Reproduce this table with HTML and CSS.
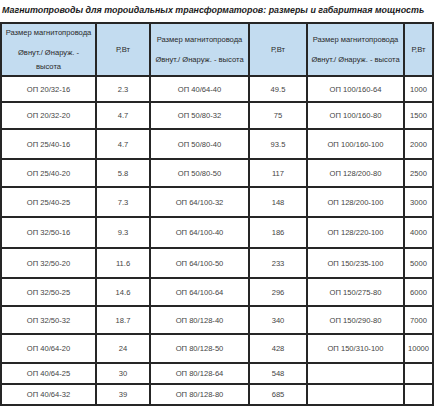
FILE: index.html
```html
<!DOCTYPE html>
<html lang="ru">
<head>
  <meta charset="UTF-8" />
  <title>Магнитопроводы</title>
  <link rel="stylesheet" href="styles.css">
</head>
<body>

  <h1 class="title">Магнитопроводы для тороидальных трансформаторов: размеры и габаритная мощность</h1>

  <div class="sizes">
    <div class="cell head"><p>Размер магнитопровода</p><p class="short">Øвнут./ Øнаруж. - высота</p></div>
    <div class="cell head">Р,Вт</div>
    <div class="cell head"><p>Размер магнитопровода</p><p>Øвнут./ Øнаруж. - высота</p></div>
    <div class="cell head">Р,Вт</div>
    <div class="cell head"><p>Размер магнитопровода</p><p>Øвнут./ Øнаруж. - высота</p></div>
    <div class="cell head">Р,Вт</div>

    <div class="cell">ОП 20/32-16</div><div class="cell">2.3</div><div class="cell">ОП 40/64-40</div><div class="cell">49.5</div><div class="cell">ОП 100/160-64</div><div class="cell">1000</div>
    <div class="cell">ОП 20/32-20</div><div class="cell">4.7</div><div class="cell">ОП 50/80-32</div><div class="cell">75</div><div class="cell">ОП 100/160-80</div><div class="cell">1500</div>
    <div class="cell">ОП 25/40-16</div><div class="cell">4.7</div><div class="cell">ОП 50/80-40</div><div class="cell">93.5</div><div class="cell">ОП 100/160-100</div><div class="cell">2000</div>
    <div class="cell">ОП 25/40-20</div><div class="cell">5.8</div><div class="cell">ОП 50/80-50</div><div class="cell">117</div><div class="cell">ОП 128/200-80</div><div class="cell">2500</div>
    <div class="cell">ОП 25/40-25</div><div class="cell">7.3</div><div class="cell">ОП 64/100-32</div><div class="cell">148</div><div class="cell">ОП 128/200-100</div><div class="cell">3000</div>
    <div class="cell">ОП 32/50-16</div><div class="cell">9.3</div><div class="cell">ОП 64/100-40</div><div class="cell">186</div><div class="cell">ОП 128/220-100</div><div class="cell">4000</div>
    <div class="cell">ОП 32/50-20</div><div class="cell">11.6</div><div class="cell">ОП 64/100-50</div><div class="cell">233</div><div class="cell">ОП 150/235-100</div><div class="cell">5000</div>
    <div class="cell">ОП 32/50-25</div><div class="cell">14.6</div><div class="cell">ОП 64/100-64</div><div class="cell">296</div><div class="cell">ОП 150/275-80</div><div class="cell">6000</div>
    <div class="cell">ОП 32/50-32</div><div class="cell">18.7</div><div class="cell">ОП 80/128-40</div><div class="cell">340</div><div class="cell">ОП 150/290-80</div><div class="cell">7000</div>
    <div class="cell">ОП 40/64-20</div><div class="cell">24</div><div class="cell">ОП 80/128-50</div><div class="cell">428</div><div class="cell">ОП 150/310-100</div><div class="cell">10000</div>
    <div class="cell">ОП 40/64-25</div><div class="cell">30</div><div class="cell">ОП 80/128-64</div><div class="cell">548</div><div class="cell"></div><div class="cell"></div>
    <div class="cell">ОП 40/64-32</div><div class="cell">39</div><div class="cell">ОП 80/128-80</div><div class="cell">685</div><div class="cell"></div><div class="cell"></div>
  </div>

</body>
</html>
```

FILE: styles.css
```css
* {
  box-sizing: border-box;
}

body {
  margin: 0;
  background: #ffffff;
  font-family: 'Liberation Sans', Arial, sans-serif;
  color: #3a3a3a;
}

.title {
  margin: 0;
  height: 22px;
  padding: 5px 0 0 2px;
  font-size: 8.9px;
  line-height: 11px;
  font-weight: bold;
  font-style: italic;
  color: #1a1a1a;
  white-space: nowrap;
}

/* table drawn as a grid: the dark background shows through the gaps as borders */
.sizes {
  display: grid;
  grid-template-columns: 93px 52px 97px 56px 95px 27px;
  grid-template-rows: 51px 24px 25px 28px 26px 28px 29px 28px 26px 26px 27px 19px 19px;
  gap: 2px;
  padding: 2px;
  width: 434px;
  background: #262626;
}

.cell {
  display: flex;
  flex-direction: column;
  align-items: center;
  justify-content: center;
  padding: 0 1px;
  background: #ffffff;
  text-align: center;
  font-size: 7.6px;
  color: #444444;
  white-space: nowrap;
}

.head {
  background: #c3dcf0;
  color: #2a2a2a;
  line-height: 14px;
  white-space: nowrap;
}

.head p {
  margin: 0;
}

.head p + p {
  margin-top: 6px;
}

.head p.short {
  width: 80px;
  white-space: normal;
}
```
